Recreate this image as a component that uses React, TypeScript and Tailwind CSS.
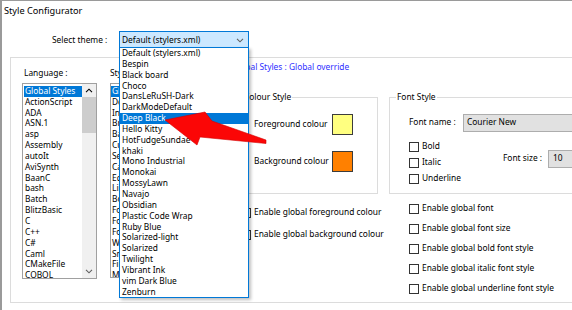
import React from 'react';

const themes = [
  'Default (stylers.xml)',
  'Bespin',
  'Black board',
  'Choco',
  'DansLeRuSH-Dark',
  'DarkModeDefault',
  'Deep Black',
  'Hello Kitty',
  'HotFudgeSundae',
  'khaki',
  'Mono Industrial',
  'Monokai',
  'MossyLawn',
  'Navajo',
  'Obsidian',
  'Plastic Code Wrap',
  'Ruby Blue',
  'Solarized-light',
  'Solarized',
  'Twilight',
  'Vibrant Ink',
  'vim Dark Blue',
  'Zenburn',
];

const languages = [
  'Global Styles',
  'ActionScript',
  'ADA',
  'ASN.1',
  'asp',
  'Assembly',
  'autoIt',
  'AviSynth',
  'BaanC',
  'bash',
  'Batch',
  'BlitzBasic',
  'C',
  'C++',
  'C#',
  'Caml',
  'CMakeFile',
  'COBOL',
];

const styles = [
  'Global override',
  'Default Style',
  'Indent guideline style',
  'Brace highlight style',
  'Bad brace colour',
  'Current line background colour',
  'Selected text colour',
  'Caret colour',
  'Edge colour',
  'Line number margin',
  'Bookmark margin',
  'Fold',
  'Fold active',
  'Fold margin',
  'White space symbol',
  'Smart HighLighting',
  'Find Mark Style',
  'Mark Style 1',
];

function Check({ label, row }: { label: string; row: string }) {
  return (
    <div className={`flex items-center whitespace-nowrap ${row}`}>
      <span className="mr-[3px] h-[10px] w-[10px] shrink-0 border border-[#333333] bg-white" />
      <span>{label}</span>
    </div>
  );
}

function Chevron({ up, color }: { up?: boolean; color: string }) {
  return (
    <svg width="8" height="5" viewBox="0 0 8 5">
      <path d={up ? 'M1 4.2 L4 1.2 L7 4.2' : 'M1 0.8 L4 3.8 L7 0.8'} fill="none" stroke={color} strokeWidth="1.1" />
    </svg>
  );
}

export default function App() {
  return (
    <div className="relative h-[310px] w-[572px] overflow-hidden border-l-2 border-t border-[#9a9a9a] bg-white font-['Noto_Sans',sans-serif] text-[8.4px] leading-[10.85px] text-black">
      <div className="h-[20px] pl-[2px] text-[9.2px] leading-[20px]">Style Configurator</div>

      <div className="mt-[10px] flex h-[18px] items-center pl-[50px]">
        <span className="w-[67px]">Select theme :</span>
        <div className="relative h-[18px] w-[130px]">
          <div className="flex h-full items-center justify-between border border-[#0078d7] bg-[#cce8ff] pl-[2px] pr-[4px]">
            <span>Default (stylers.xml)</span>
            <Chevron color="#606060" />
          </div>
          <div className="absolute left-0 top-[16px] z-20 w-[130px] border border-[#0078d7] bg-white shadow-[2px_2px_3px_rgba(0,0,0,0.25)]">
            {themes.map((t) => (
              <div
                key={t}
                className={`h-[10.85px] whitespace-nowrap pl-[2px] ${t === 'Deep Black' ? 'bg-[#0078d7] text-white' : ''}`}
              >
                {t}
              </div>
            ))}
          </div>
        </div>
      </div>

      <div className="ml-[8px] mt-[8px] flex h-[246px] w-[600px] border-b border-l border-t border-[#dcdcdc]">
        {/* language list */}
        <div className="ml-[11px] pt-[10px]">
          <div className="pl-[2px]">Language :</div>
          <div className="mt-[4px] flex h-[196px] w-[75px] border border-[#a0a0a0]">
            <div className="flex-1 overflow-hidden pt-[2px]">
              {languages.map((l, i) => (
                <div key={l} className={`h-[10.85px] whitespace-nowrap pl-[1px] ${i === 0 ? 'ml-[1px] bg-[#0078d7] text-white' : 'pl-[2px]'}`}>
                  {l}
                </div>
              ))}
            </div>
            <div className="flex w-[14px] flex-col bg-[#f0f0f0]">
              <div className="flex h-[13px] items-center justify-center">
                <Chevron up color="#000" />
              </div>
              <div className="h-[36px] bg-[#cdcdcd]" />
              <div className="flex-1" />
              <div className="flex h-[13px] items-center justify-center">
                <Chevron color="#606060" />
              </div>
            </div>
          </div>
        </div>

        {/* styles list */}
        <div className="ml-[13px] pt-[10px]">
          <div>Styles :</div>
          <div className="mt-[4px] h-[195px] w-[117px] overflow-hidden border border-[#a0a0a0] pt-[2px]">
            {styles.map((s, i) => (
              <div key={s} className={`h-[10.85px] whitespace-nowrap pl-[1px] ${i === 0 ? 'bg-[#0078d7] text-white' : ''}`}>
                {s}
              </div>
            ))}
          </div>
        </div>

        {/* style details */}
        <div className="ml-[5px] pt-[4px]">
          <div className="text-[#2f2fff]">Global Styles : Global override</div>

          <div className="mt-[24px] flex">
            <div className="relative ml-[5px] h-[97px] w-[141px] border border-[#dcdcdc]">
              <span className="absolute left-[5px] top-[-6px] bg-white px-[1px]">Colour Style</span>
              <div className="mt-[16px] flex h-[21px] items-center pl-[16px]">
                <span className="w-[78px]">Foreground colour</span>
                <span className="h-[21px] w-[21px] border border-[#3c3c3c] bg-[#ffff80]" />
              </div>
              <div className="mt-[16px] flex h-[21px] items-center pl-[16px]">
                <span className="w-[78px]">Background colour</span>
                <span className="h-[21px] w-[21px] border border-[#3c3c3c] bg-[#ff8000]" />
              </div>
            </div>

            <div className="relative ml-[11px] h-[97px] w-[200px] border border-[#dcdcdc]">
              <span className="absolute left-[6px] top-[-6px] bg-white px-[1px]">Font Style</span>
              <div className="mt-[16px] flex h-[18px] items-center pl-[19px]">
                <span className="w-[54px]">Font name :</span>
                <div className="flex h-[18px] flex-1 items-center border border-[#adadad] bg-[#e1e1e1] pl-[3px]">Courier New</div>
              </div>
              <div className="mt-[7px] flex items-start pl-[19px]">
                <div className="w-[97px]">
                  <Check label="Bold" row="h-[16px]" />
                  <Check label="Italic" row="h-[16px]" />
                  <Check label="Underline" row="h-[16px]" />
                </div>
                <div className="mt-[11px] flex h-[18px] items-center">
                  <span className="w-[45px]">Font size :</span>
                  <div className="flex h-[18px] w-[40px] items-center border border-[#adadad] bg-[#e1e1e1] pl-[4px]">10</div>
                </div>
              </div>
            </div>
          </div>

          <div className="flex items-start">
            <div className="ml-[9px] mt-[8px] w-[168px]">
              <Check label="Enable global foreground colour" row="h-[22px]" />
              <Check label="Enable global background colour" row="h-[22px]" />
            </div>
            <div className="mt-[5px]">
              <Check label="Enable global font" row="h-[20px]" />
              <Check label="Enable global font size" row="h-[20px]" />
              <Check label="Enable global bold font style" row="h-[20px]" />
              <Check label="Enable global italic font style" row="h-[20px]" />
              <Check label="Enable global underline font style" row="h-[20px]" />
            </div>
          </div>
        </div>
      </div>

      {/* red callout arrow */}
      <svg
        className="pointer-events-none absolute left-[-2px] top-[-1px] z-30"
        width="572"
        height="310"
        viewBox="0 0 572 310"
      >
        <polygon
          points="165,120 205,112 212,121 266,140 266,143.5 200,137 197,145"
          fill="#fb0606"
          stroke="#d40000"
          strokeWidth="0.6"
          strokeLinejoin="round"
        />
      </svg>
    </div>
  );
}
